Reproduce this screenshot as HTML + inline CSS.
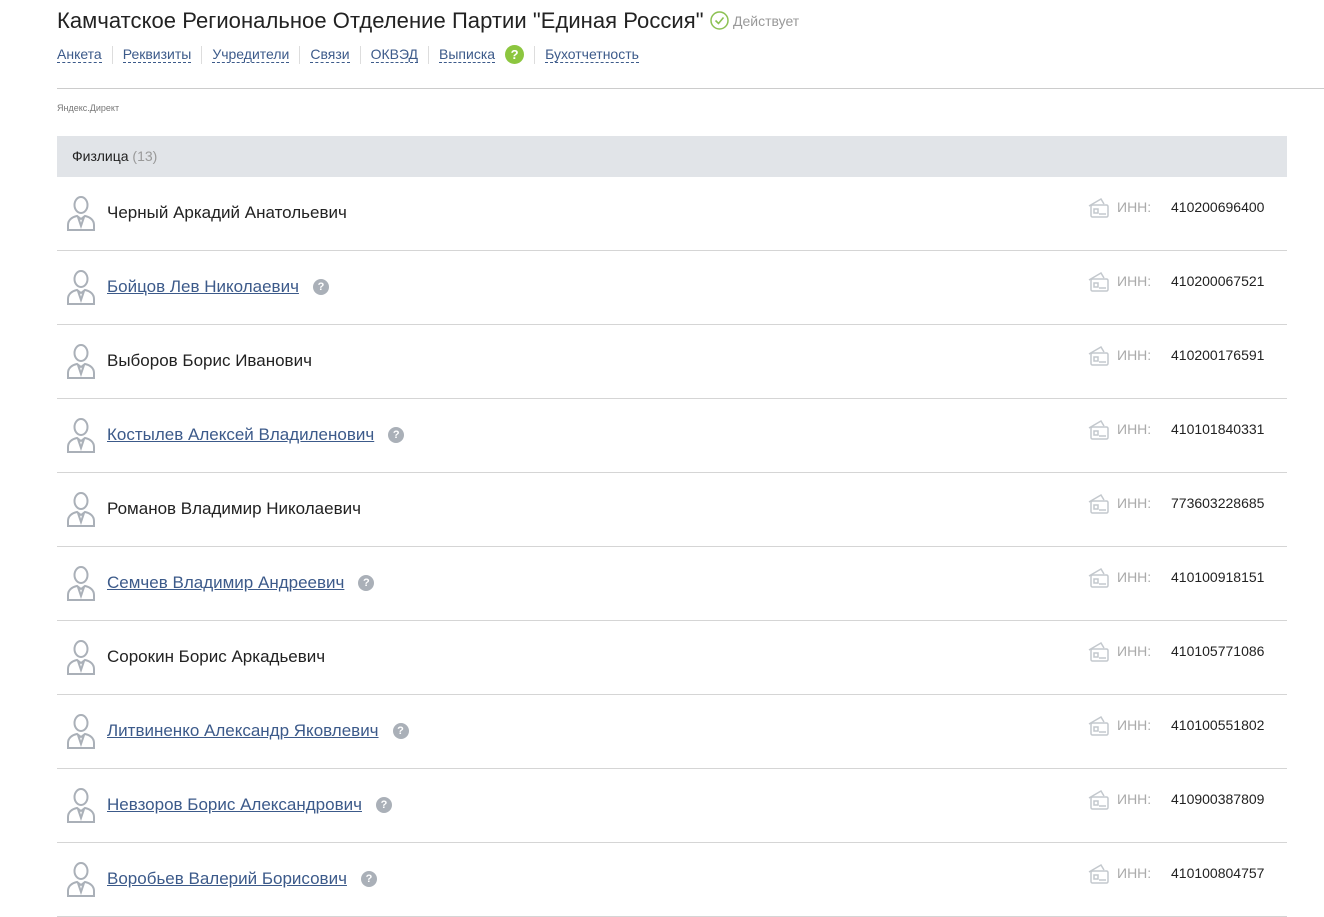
<!DOCTYPE html>
<html><head><meta charset="utf-8"><style>
body{margin:0;background:#fff;font-family:"Liberation Sans",Arial,sans-serif;width:1324px;height:914px;overflow:hidden;position:relative}
.t{position:absolute;left:57px;top:8px;font-size:22px;color:#222;white-space:nowrap;letter-spacing:0.05px}
.st{position:absolute;left:710px;top:11px;font-size:14px;color:#999;display:flex;align-items:center;gap:4px}
.nav{position:absolute;left:57px;top:45px;font-size:14px;display:flex;align-items:center;white-space:nowrap}
.nav a{color:#3c5a8a;text-decoration:none;border-bottom:1px dashed #3c5a8a;line-height:16px}
.nav .s{width:1px;height:18px;background:#ddd;margin:0 10px}
.q{display:inline-block;border-radius:50%;color:#fff;font-weight:bold;text-align:center}
.hr{position:absolute;left:57px;right:0;top:88px;height:1px;background:#ccc}
.yd{position:absolute;left:57px;top:103px;font-size:9px;color:#777}
.hd{position:absolute;left:57px;top:136px;width:1230px;height:41px;background:#e1e4e8;font-size:14px;color:#222;line-height:41px;box-sizing:border-box;padding-left:15px}
.hd span{color:#999}
.row{position:absolute;left:57px;width:1230px;height:74px;border-bottom:1px solid #d5d5d5;box-sizing:border-box}
.row svg.p{position:absolute;left:9px;top:18px}
.nm{position:absolute;left:50px;top:26px;font-size:17px;color:#222;white-space:nowrap;display:flex;align-items:center}
.nm a{color:#3c5a8a;text-decoration:underline}
.nm .q{width:16px;height:16px;font-size:11px;line-height:16px;background:#aab0b8;margin-left:14px}
.card{position:absolute;left:1030px;top:20px}
.inn{position:absolute;left:1060px;top:22px;font-size:14px;color:#aaa}
.num{position:absolute;left:1114px;top:22px;font-size:14px;color:#222}
</style></head><body>
<div class="t">Камчатское Региональное Отделение Партии "Единая Россия"</div>
<div class="st"><svg width="19" height="19" viewBox="0 0 19 19"><circle cx="9.5" cy="9.5" r="8.5" fill="none" stroke="#8cc152" stroke-width="1.5"/><path d="M5.5 9.5l3 3 5-6" fill="none" stroke="#8cc152" stroke-width="1.6"/></svg>Действует</div>
<div class="nav"><a>Анкета</a><span class="s"></span><a>Реквизиты</a><span class="s"></span><a>Учредители</a><span class="s"></span><a>Связи</a><span class="s"></span><a>ОКВЭД</a><span class="s"></span><a>Выписка</a><span class="q" style="width:19px;height:19px;line-height:19px;font-size:13px;background:#8cc63f;margin-left:10px">?</span><span class="s"></span><a>Бухотчетность</a></div>
<div class="hr"></div>
<div class="yd">Яндекс.Директ</div>
<div class="hd">Физлица <span>(13)</span></div>
<div id="rows"></div>
<script>
var d=[["Черный Аркадий Анатольевич",0,"410200696400"],["Бойцов Лев Николаевич",1,"410200067521"],["Выборов Борис Иванович",0,"410200176591"],["Костылев Алексей Владиленович",1,"410101840331"],["Романов Владимир Николаевич",0,"773603228685"],["Семчев Владимир Андреевич",1,"410100918151"],["Сорокин Борис Аркадьевич",0,"410105771086"],["Литвиненко Александр Яковлевич",1,"410100551802"],["Невзоров Борис Александрович",1,"410900387809"],["Воробьев Валерий Борисович",1,"410100804757"]];
var h="";
d.forEach(function(r,i){
var top=177+i*74;
var n=r[1]?'<a>'+r[0]+'</a><span class="q">?</span>':r[0];
h+='<div class="row" style="top:'+top+'px"><svg class="p" width="30" height="36" viewBox="0 0 30 36" fill="none" stroke="#aab0b8" stroke-width="2"><ellipse cx="15" cy="10" rx="6.5" ry="8"/><path d="M2 35v-5c0-5 4-8 9-9l4 3 4-3c5 1 9 4 9 9v5z"/><path d="M12 22l3 9 3-9"/></svg><div class="nm">'+n+'</div><svg class="card" width="23" height="22" viewBox="0 0 23 22" fill="none" stroke="#c3c8cd" stroke-width="1.5"><path d="M2 9l12-7 3 5"/><rect x="4" y="8" width="17" height="12" rx="1.5"/><rect x="7" y="12" width="4" height="4"/><path d="M12 17h7"/></svg><div class="inn">ИНН:</div><div class="num">'+r[2]+'</div></div>';
});
document.getElementById("rows").innerHTML=h;
</script>
</body></html>
